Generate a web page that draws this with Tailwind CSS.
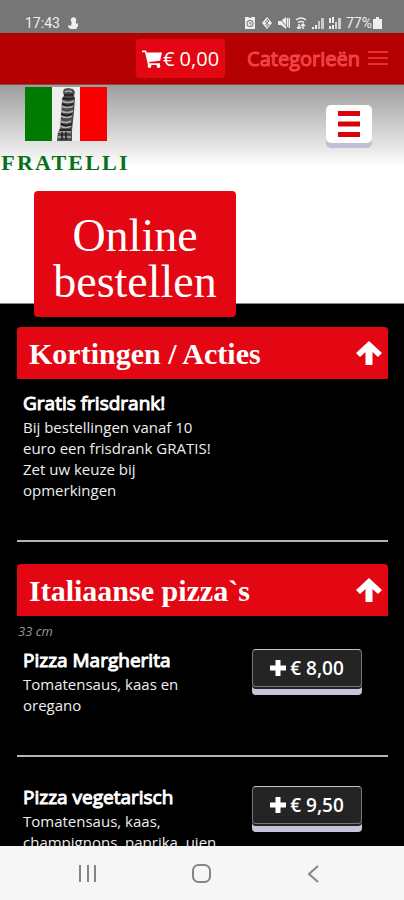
<!DOCTYPE html>
<html lang="nl">
<head>
    <meta charset="UTF-8">
    <meta name="viewport" content="width=device-width, initial-scale=1.0">
    <title>Fratelli - Online bestellen</title>
    <script src="https://cdn.jsdelivr.net/npm/@tailwindcss/browser@4"></script>
</head>
<body class="h-screen flex flex-col overflow-hidden bg-black font-['Open_Sans',sans-serif] text-white">

    <!-- Status bar -->
    <div class="shrink-0 h-[33px] pt-3 pl-[25px] pr-[22px] flex items-center justify-between bg-[#767676] font-[Roboto,sans-serif] text-sm text-[#eeeeee]">
        <div class="flex items-center gap-2">
            <span>17:43</span>
            <svg class="w-[10px] h-3" viewBox="0 0 10 12" fill="currentColor"><circle cx="5.500" cy="3" r="2.700"/><path d="M4 4h4v3l2-1v3l-2 3H2L0 9.500 1 8l2 1z"/></svg>
        </div>
        <div class="flex items-center gap-[5px]">
            <svg class="w-3 h-3" viewBox="0 0 12 12"><path d="M1 0h3l2 1 2-1h3v12H1z" fill="currentColor"/><circle cx="6" cy="6.500" r="3.500" fill="#767676"/><circle cx="6" cy="6.500" r="2.500" fill="currentColor"/><path d="M6 5v2h1.500" stroke="#767676" fill="none"/></svg>
            <svg class="w-3 h-3" viewBox="0 0 12 12"><path d="M6 0l5 6-5 6-5-6z" fill="currentColor"/><path d="M4 4l4 4-2 2V2l2 2-4 4" stroke="#8c8c8c" fill="none"/></svg>
            <svg class="w-3 h-3" viewBox="0 0 12 12"><path d="M0 4h3l5-4v12L3 8H0z" fill="currentColor"/><path d="M9.500 1v10M11.500 1v10" stroke="currentColor" stroke-width="1.500"/><path d="M1 1l9 10" stroke="#767676"/></svg>
            <svg class="w-3 h-3" viewBox="0 0 12 12" fill="none" stroke="currentColor" stroke-width="1.500"><path d="M1 3q5-4 10 0M3 5.500q3-2 6 0M4 7v5M2 10l2 2 2-2M8 12V7M6 9l2-2 2 2"/></svg>
            <svg class="w-3 h-3" viewBox="0 0 12 12" fill="currentColor"><path d="M0 10h2v2H0zM3 8h2v4H3z"/><path d="M6 4h2v8H6zM9 1h3v11H9z" opacity=".7"/></svg>
            <svg class="w-3 h-3" viewBox="0 0 12 12" fill="currentColor"><path d="M0 1h2v5H0zM3 0h2v6H3zM0 9h2v3H0zM3 8h2v4H3z"/><path d="M6 5h2v7H6zM9 1h3v11H9z" opacity=".75"/></svg>
            <span class="flex items-center gap-[1px]">77%
                <svg class="w-[9px] h-3" viewBox="0 0 9 12" fill="currentColor"><path d="M3 0h3v2h3v10H0V2h3z"/></svg>
            </span>
        </div>
    </div>

    <!-- Cart and categories -->
    <nav class="shrink-0 h-[52px] pr-4 flex items-center justify-end bg-[#b40000] border-b border-[#8f4a4a] text-xl">
        <a href="#cart" class="h-[39px] px-[6px] mr-[22px] flex items-center gap-[1px] rounded-[3px] bg-[#e30613] font-medium">
            <svg class="w-5 h-[18px]" viewBox="0 0 20 18" fill="currentColor"><path d="M0 0.500h4l.7 2H20l-1.800 8.200L7 12l.4 1.300H18V15H6L3 2.300H0z"/><circle cx="7.500" cy="16" r="1.900"/><circle cx="16.500" cy="16" r="1.900"/></svg>
            <span>€ 0,00</span>
        </a>
        <button type="button" class="flex items-center gap-2 text-[#f02a33]">
            <span class="[-webkit-text-stroke:1px_#f04a50]">Categorieën</span>
            <svg class="w-5 h-4" viewBox="0 0 20 16" stroke="currentColor" stroke-width="2"><path d="M0 1h20M0 7h20M0 13h20"/></svg>
        </button>
    </nav>

    <main class="flex-1 min-h-0 overflow-hidden">
        <header class="h-[219px] bg-white bg-linear-to-b from-[#9e9e9e] to-white to-[82px] border-b border-[#888888]">
            <div class="flex items-start justify-between pr-8">
                <a href="#home" class="w-[131px] pt-[2px] flex flex-col items-center">
                    <!-- Flag with the leaning tower -->
                    <svg class="w-[82px] h-[54px]" viewBox="0 0 82 54">
                        <path d="M0 0h27v54H0z" fill="#007a00"/>
                        <path d="M27 0h28v54H27z" fill="#eeeeee"/>
                        <path d="M55 0h27v54H55z" fill="#f80000"/>
                        <path d="M39 2l4-1 5 1 2 3-1 4 1 2-1 14-2 18v11H32l1-10h2l2-30v-3l2-2-1-4z" fill="#4c4c4c"/>
                        <path d="M40 5q4-2 7 0M37 14q6 3 12 0M36 19q6 3 12 0M36 24q6 3 12 0M36 29q6 3 11 0M35 34q6 3 11 0M35 39q6 3 11 0M33 45h13M33 50h13" stroke="#b0b0b0" stroke-width="1.500" fill="none"/>
                        <path d="M39 8h9M38 11q6 2 11 0M37 17q6 3 11 0M36 27q6 3 11 0M36 37q6 3 11 0M34 43h12M37 45v8M41 45v8" stroke="#1c1c1c" stroke-width="1.500" fill="none"/>
                    </svg>
                    <span class="mt-2 font-['Liberation_Serif',serif] text-[22px] leading-[28px] font-bold tracking-widest text-[#08701a]">FRATELLI</span>
                </a>
                <button type="button" aria-label="Menu" class="mt-5 w-[46px] h-[38px] flex items-center justify-center rounded-[5px] bg-white text-[#dc0008] shadow-[0_5px_0_#c0c0d4]">
                    <svg class="w-[22px] h-[26px]" viewBox="0 0 22 26" fill="currentColor"><path d="M0 0h22v5H0zM0 10.500h22v5H0zM0 21h22v5H0z"/></svg>
                </button>
            </div>
            <h1 class="relative w-[202px] mt-[14px] ml-[34px] pt-[22px] pb-3 rounded-[4px] bg-[#e30613] text-center font-['Liberation_Serif',serif] text-[46px] leading-[46px]">Online<br>bestellen</h1>
        </header>

        <div class="pt-[23px] pl-[17px] pr-4">
            <section class="mb-[22px]">
                <h2>
                    <button type="button" class="w-full h-[52px] pl-3 pr-[6px] flex items-center justify-between rounded-t-[4px] bg-[#e30613] font-['Liberation_Serif',serif] text-[30px] font-bold">
                        Kortingen / Acties
                        <svg class="w-[26px] h-6" viewBox="0 0 26 24" fill="currentColor"><path d="M13 0l13 12-4 4-5.500-5V24h-7V11L4 16l-4-4z"/></svg>
                    </button>
                </h2>
                <article class="pt-3 pb-[39px] pl-[6px] border-b-2 border-[#b5b3b5]">
                    <div class="w-[200px]">
                        <h3 class="pb-[1px] text-[19px] leading-[25px] [-webkit-text-stroke:1px_white]">Gratis frisdrank!</h3>
                        <p class="text-[15px] leading-[21px] text-[#eeeeee]">Bij bestellingen vanaf 10 euro een frisdrank GRATIS! Zet uw keuze bij opmerkingen</p>
                    </div>
                </article>
            </section>

            <section>
                <h2>
                    <button type="button" class="w-full h-[52px] pl-3 pr-[6px] flex items-center justify-between rounded-t-[4px] bg-[#e30613] font-['Liberation_Serif',serif] text-[30px] font-bold">
                        Italiaanse pizza`s
                        <svg class="w-[26px] h-6" viewBox="0 0 26 24" fill="currentColor"><path d="M13 0l13 12-4 4-5.500-5V24h-7V11L4 16l-4-4z"/></svg>
                    </button>
                </h2>
                <p class="pt-[6px] pl-[1px] text-[13px] leading-[18px] italic text-[#999999]">33 cm</p>
                <article class="pt-2 pb-[39px] pl-[6px] pr-[26px] flex items-start justify-between border-b-2 border-[#b5b3b5]">
                    <div class="w-[200px]">
                        <h3 class="pb-[1px] text-[19px] leading-[25px] [-webkit-text-stroke:1px_white]">Pizza Margherita</h3>
                        <p class="w-[180px] text-[15px] leading-[21px] text-[#eeeeee]">Tomatensaus, kaas en oregano</p>
                    </div>
                    <button type="button" class="w-[110px] h-[38px] mt-[1px] flex items-center justify-center gap-1 rounded-[4px] border border-[#777777] border-t-[#c4c4c4] bg-[#242424] text-[19px] font-semibold shadow-[0_2px_0_#222222,0_8px_0_#c5c5da]">
                        <svg class="w-4 h-4" viewBox="0 0 16 16" fill="currentColor"><path d="M5.500 0h5v5.500H16v5h-5.500V16h-5v-5.500H0v-5h5.500z"/></svg>
                        <span>€ 8,00</span>
                    </button>
                </article>
                <article class="pt-7 pb-[39px] pl-[6px] pr-[26px] flex items-start justify-between border-b-2 border-[#b5b3b5]">
                    <div class="w-[200px]">
                        <h3 class="pb-[1px] text-[19px] leading-[25px] [-webkit-text-stroke:1px_white]">Pizza vegetarisch</h3>
                        <p class="text-[15px] leading-[21px] text-[#eeeeee]">Tomatensaus, kaas, champignons, paprika, uien</p>
                    </div>
                    <button type="button" class="w-[110px] h-[38px] mt-[1px] flex items-center justify-center gap-1 rounded-[4px] border border-[#777777] border-t-[#c4c4c4] bg-[#242424] text-[19px] font-semibold shadow-[0_2px_0_#222222,0_8px_0_#c5c5da]">
                        <svg class="w-4 h-4" viewBox="0 0 16 16" fill="currentColor"><path d="M5.500 0h5v5.500H16v5h-5.500V16h-5v-5.500H0v-5h5.500z"/></svg>
                        <span>€ 9,50</span>
                    </button>
                </article>
            </section>
        </div>
    </main>

    <!-- Android navigation -->
    <footer class="shrink-0 h-[54px] px-[78px] flex items-center justify-between bg-[#f6f6f6] text-[#858585]">
        <button type="button" aria-label="Recent"><svg class="w-5 h-5" viewBox="0 0 20 20" fill="none" stroke="currentColor" stroke-width="2"><path d="M2 2v17M10 2v17M17 2v17"/></svg></button>
        <button type="button" aria-label="Home"><svg class="w-5 h-5" viewBox="0 0 20 20" fill="none" stroke="currentColor" stroke-width="2"><rect x="1" y="2" width="17" height="17" rx="5.500"/></svg></button>
        <button type="button" aria-label="Terug"><svg class="w-5 h-5" viewBox="0 0 20 20" fill="none" stroke="currentColor" stroke-width="2"><path d="M12 3L3 11l9 8"/></svg></button>
    </footer>
</body>
</html>
